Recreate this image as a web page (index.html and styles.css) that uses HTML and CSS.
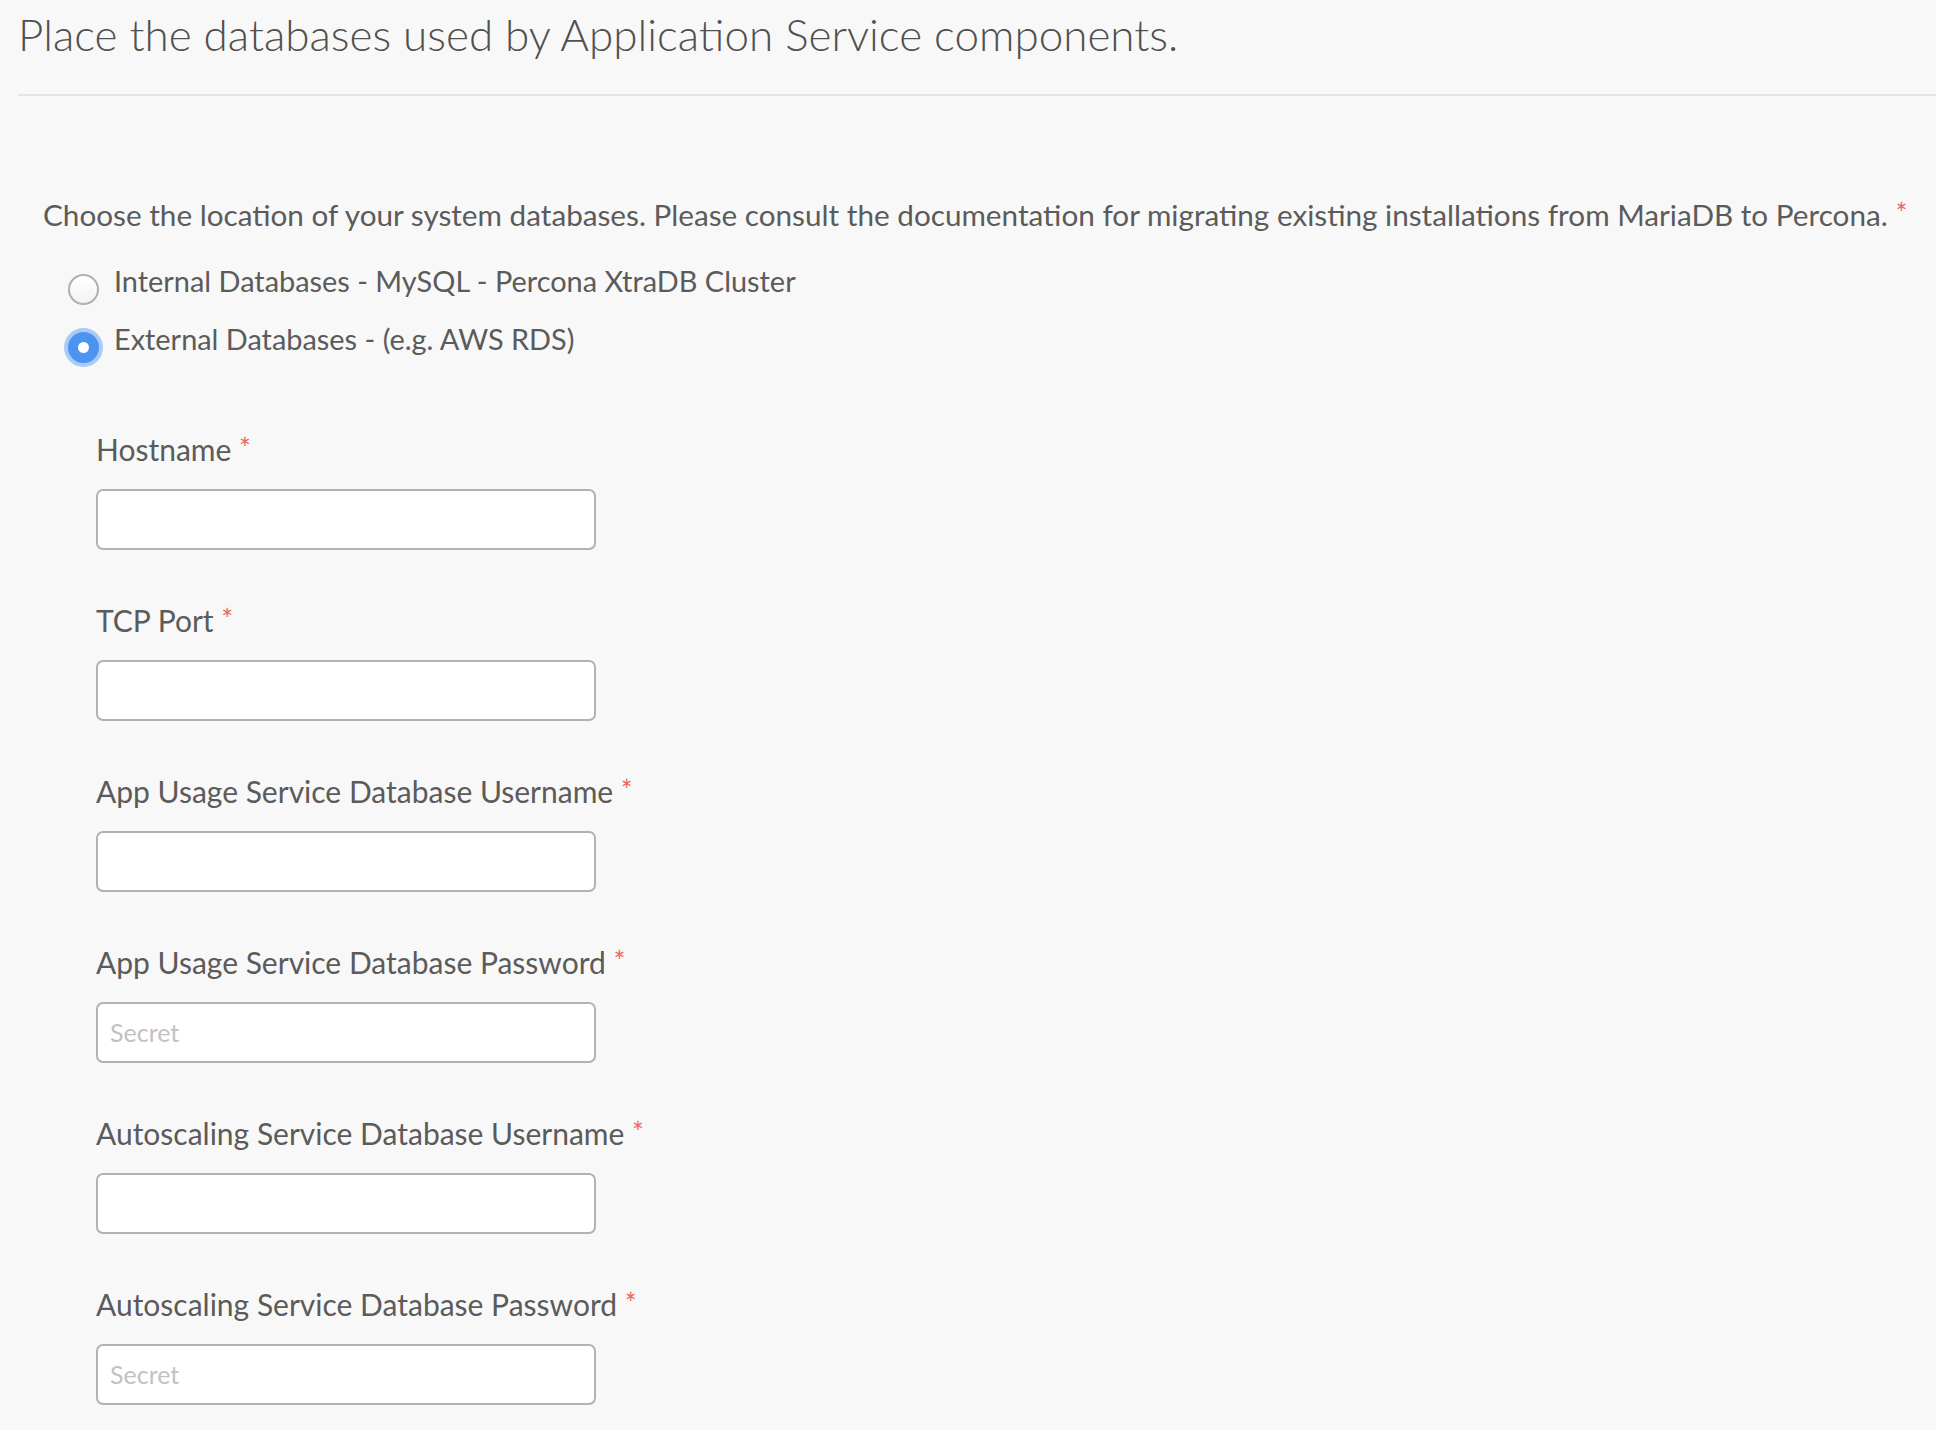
FILE: index.html
```html
<!DOCTYPE html>
<html lang="en">
<head>
<meta charset="utf-8">
<title>Assign databases</title>
<link rel="stylesheet" href="styles.css">
</head>
<body>
<div class="page">
  <h1 class="title">Place the databases used by Application Service components.</h1>
  <div class="divider"></div>
  <div class="content">
    <p class="desc">Choose the location of your system databases. Please consult the documentation for migrating existing installations from MariaDB to Percona. <span class="req">*</span></p>
    <div class="radios">
      <label class="radio-row"><span class="radio"></span><span class="radio-text">Internal Databases - MySQL - Percona XtraDB Cluster</span></label>
      <label class="radio-row"><span class="radio checked"></span><span class="radio-text">External Databases - (e.g. AWS RDS)</span></label>
    </div>
    <div class="fields">
      <div class="field"><div class="label">Hostname <span class="req">*</span></div><input class="input" type="text"></div>
      <div class="field"><div class="label">TCP Port <span class="req">*</span></div><input class="input" type="text"></div>
      <div class="field"><div class="label">App Usage Service Database Username <span class="req">*</span></div><input class="input" type="text"></div>
      <div class="field"><div class="label">App Usage Service Database Password <span class="req">*</span></div><input class="input" type="password" placeholder="Secret"></div>
      <div class="field"><div class="label">Autoscaling Service Database Username <span class="req">*</span></div><input class="input" type="text"></div>
      <div class="field"><div class="label">Autoscaling Service Database Password <span class="req">*</span></div><input class="input" type="password" placeholder="Secret"></div>
    </div>
  </div>
</div>
</body>
</html>
```

FILE: styles.css
```css
html, body {
  margin: 0;
  padding: 0;
  background: #f8f8f8;
}
body {
  font-family: Lato, "Noto Sans", sans-serif;
  color: #5b5b5b;
}
.page {
  padding-left: 18px;
}
.title {
  margin: 8px 0 0 0;
  font-size: 44px;
  line-height: 52px;
  font-weight: 300;
  color: #505050;
}
.divider {
  height: 2px;
  background: #e4e4e4;
  margin-top: 34px;
}
.content {
  padding-left: 25px;
}
.desc {
  margin: 98.5px 0 0 0;
  font-size: 29.7px;
  line-height: 40px;
}
.req {
  color: #e8695e;
  font-size: 28px;
  line-height: 1;
  vertical-align: 2px;
}
.radios {
  margin-top: 26px;
  display: flex;
  flex-direction: column;
  gap: 18px;
  padding-left: 25px;
}
.radio-row {
  display: flex;
  align-items: flex-start;
  gap: 15px;
  height: 40px;
  font-size: 28.9px;
  line-height: 40px;
}
.radio {
  box-sizing: border-box;
  width: 31px;
  height: 31px;
  margin-top: 13px;
  border-radius: 50%;
  border: 2px solid #b0b0b0;
  background: linear-gradient(#ffffff, #f3f3f3);
  flex: none;
}
.radio.checked {
  border: none;
  background: #4d93f0;
  box-shadow: 0 0 0 4px #a9cbf7;
  position: relative;
}
.radio.checked::after {
  content: "";
  position: absolute;
  left: 10px;
  top: 10px;
  width: 11px;
  height: 11px;
  border-radius: 50%;
  background: #ffffff;
}
.fields {
  margin-top: 70px;
  padding-left: 53px;
  display: flex;
  flex-direction: column;
  gap: 50px;
}
.field {
  display: flex;
  flex-direction: column;
  gap: 20px;
}
.label {
  font-size: 30px;
  line-height: 40px;
  height: 40px;
}
.input {
  box-sizing: border-box;
  width: 500px;
  height: 61px;
  margin: 0;
  border: 2px solid #b2b2b2;
  border-radius: 7px;
  background: #ffffff;
  padding: 0 12px;
  font-family: Lato, "Noto Sans", sans-serif;
  font-size: 25px;
  color: #555;
  outline: none;
}
.input::placeholder {
  color: #c2c2c2;
}
```
